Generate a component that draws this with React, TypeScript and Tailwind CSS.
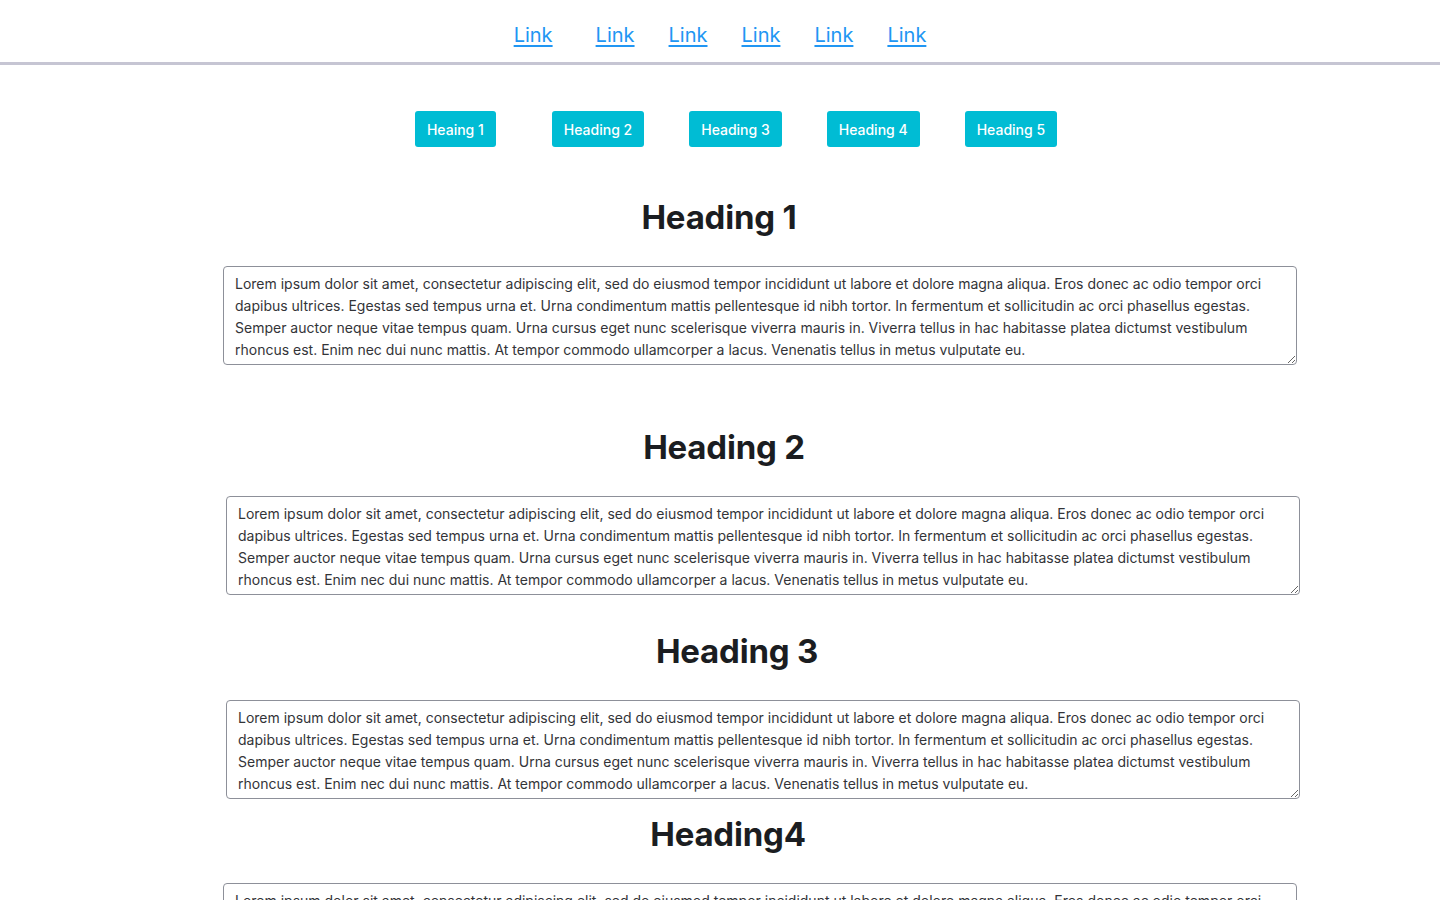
import React from 'react';

const LOREM =
  'Lorem ipsum dolor sit amet, consectetur adipiscing elit, sed do eiusmod tempor incididunt ut labore et dolore magna aliqua. Eros donec ac odio tempor orci dapibus ultrices. Egestas sed tempus urna et. Urna condimentum mattis pellentesque id nibh tortor. In fermentum et sollicitudin ac orci phasellus egestas. Semper auctor neque vitae tempus quam. Urna cursus eget nunc scelerisque viverra mauris in. Viverra tellus in hac habitasse platea dictumst vestibulum rhoncus est. Enim nec dui nunc mattis. At tempor commodo ullamcorper a lacus. Venenatis tellus in metus vulputate eu.';

const font = { fontFamily: 'Inter, "Noto Sans", sans-serif' };

function Section({ title, headClass, areaClass, wrapClass }: { title: string; headClass: string; areaClass: string; wrapClass: string }) {
  return (
    <section className={wrapClass}>
      <h2 className={`text-center text-[33px] font-bold leading-[40px] text-[#1b1d21] tracking-[-0.2px] ${headClass}`}>{title}</h2>
      <textarea
        defaultValue={LOREM}
        className={`block w-[1074px] h-[99px] mt-[29px] rounded-[4px] border border-[#8d9099] px-[11px] py-[6px] text-[14px] leading-[22px] text-[#333438] outline-none ${areaClass}`}
        style={font}
      />
    </section>
  );
}

export default function App() {
  const links = ['Link', 'Link', 'Link', 'Link', 'Link', 'Link'];
  const buttons = ['Heaing 1', 'Heading 2', 'Heading 3', 'Heading 4', 'Heading 5'];

  return (
    <div className="min-h-screen bg-white overflow-hidden" style={font}>
      <nav className="h-[65px] border-b-[3px] border-[#c6c5d3] flex items-center justify-center gap-[34px] pt-[8px]">
        {links.map((l, i) => (
          <a key={i} href="#" className={`text-[20px] text-[#2196f3] underline underline-offset-[3px] ${i === 0 ? 'mr-[9px]' : ''}`}>
            {l}
          </a>
        ))}
      </nav>

      <div className="flex justify-center gap-[45px] mt-[46px] pl-[32px]">
        {buttons.map((b, i) => (
          <button
            key={b}
            className={`h-[36px] px-[12px] rounded-[3px] bg-[#00bcd4] text-white text-[14px] font-medium ${i === 0 ? 'mr-[11px]' : ''}`}
          >
            {b}
          </button>
        ))}
      </div>

      <Section title="Heading 1" wrapClass="mt-[50px]" headClass="pr-[2px]" areaClass="ml-[223px]" />
      <Section title="Heading 2" wrapClass="mt-[62px]" headClass="pl-[8px]" areaClass="ml-[226px]" />
      <Section title="Heading 3" wrapClass="mt-[36px]" headClass="pl-[34px]" areaClass="ml-[226px]" />
      <Section title="Heading4" wrapClass="mt-[15px]" headClass="pl-[16px]" areaClass="ml-[223px]" />
    </div>
  );
}
